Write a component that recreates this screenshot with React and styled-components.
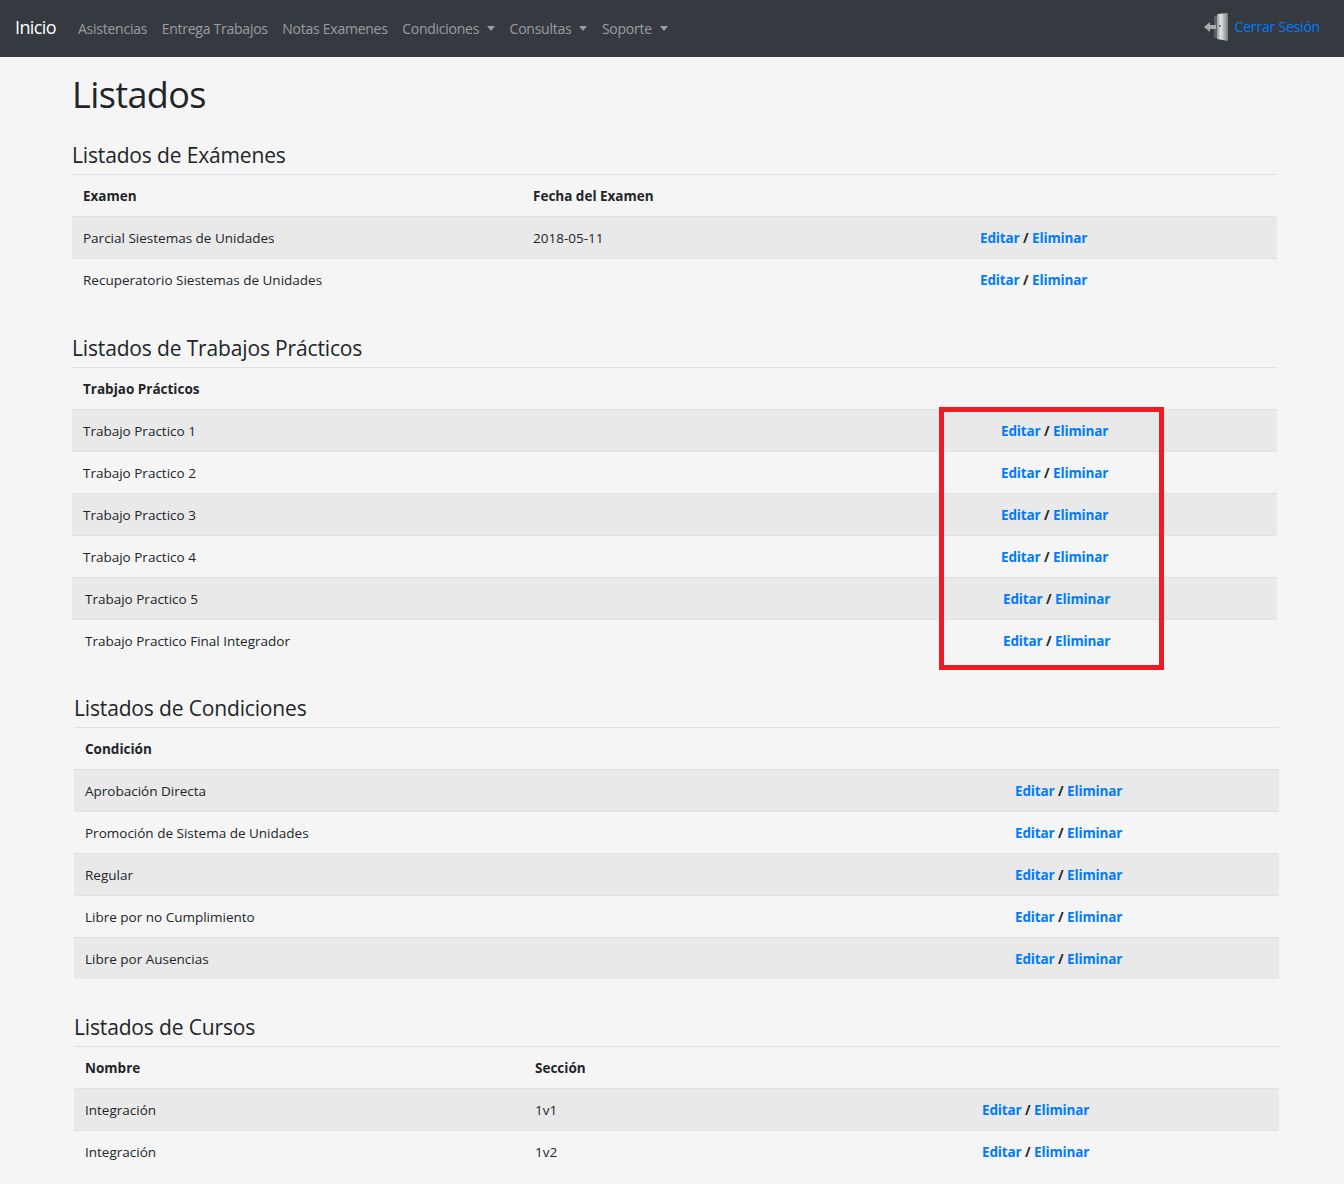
import React from 'react'
import styled, { createGlobalStyle } from 'styled-components'

const GlobalStyle = createGlobalStyle`
  html, body {
    margin: 0;
    padding: 0;
    background: #f5f5f5;
  }
  body {
    font-family: "Open Sans", "Noto Sans", "Liberation Sans", sans-serif;
    font-size: 13.5px;
    color: #212529;
  }
`
const Page = styled.div`
  position: relative;
  height: 1184px;
  overflow: hidden;
`
const Navbar = styled.nav`
  display: flex;
  align-items: center;
  height: 57px;
  padding: 0 24px 0 15px;
  background: #343a40;
`
const Brand = styled.a`
  margin: -3px 22px 0 0;
  font-size: 18px;
  letter-spacing: -0.6px;
  color: #fff;
`
const NavLinks = styled.div`
  display: flex;
  flex: 1;
  gap: 14.5px;
  margin-top: -1px;
`
const NavLink = styled.a`
  display: flex;
  align-items: center;
  font-size: 14px;
  letter-spacing: -0.25px;
  color: rgba(255, 255, 255, 0.5);
`
const Caret = styled.span`
  margin-left: 8px;
  border-top: 5px solid rgba(255, 255, 255, 0.5);
  border-left: 4.5px solid transparent;
  border-right: 4.5px solid transparent;
`
const Logout = styled.a`
  display: flex;
  align-items: center;
  gap: 5px;
  margin-top: -4px;
  font-size: 14px;
  letter-spacing: -0.2px;
  color: #007bff;
`
const Main = styled.main`
  padding: 0 67px 0 72px;
`
const Title = styled.h1`
  margin: 0;
  padding: 14px 0 0;
  height: 74px;
  box-sizing: border-box;
  font-size: 36px;
  font-weight: 500;
  line-height: 48px;
  letter-spacing: -0.6px;
`
const Section = styled.section`
  margin-left: ${p => p.$offset}px;
  margin-right: ${p => -p.$offset}px;
  padding-bottom: ${p => p.$after}px;
`
const SectionTitle = styled.h3`
  display: flex;
  align-items: center;
  margin: 0;
  padding-top: 4px;
  height: 44px;
  border-bottom: 1px solid #dee2e6;
  box-sizing: border-box;
  font-size: 21px;
  font-weight: 500;
  letter-spacing: -0.15px;
`
const Table = styled.table`
  width: 100%;
  border-collapse: collapse;
  table-layout: fixed;
`
const HeadCell = styled.th`
  height: 41px;
  padding: 0 11px;
  text-align: left;
  font-weight: 700;
`
const Row = styled.tr`
  background: ${p => (p.$odd ? '#e9e9e9' : 'transparent')};
  border-top: 1px solid #dee2e6;
`
const Cell = styled.td`
  height: 41px;
  padding: 0 11px 0 ${p => 11 + (p.$shift || 0)}px;
`
const Action = styled.a`
  font-weight: 700;
  letter-spacing: -0.15px;
  color: #007bff;
`
const Slash = styled.b`
  font-weight: 700;
`
const Highlight = styled.div`
  position: absolute;
  left: 939px;
  top: 407px;
  width: 225px;
  height: 263px;
  box-sizing: border-box;
  border: 5px solid #ed1c24;
`

const DoorIcon = () => (
  <svg width="26" height="28" viewBox="0 0 26 28">
    <defs>
      <linearGradient id="door" x1="0" x2="1" y1="0" y2="0">
        <stop offset="0" stopColor="#9a9c9e" />
        <stop offset="0.35" stopColor="#e4e4e4" />
        <stop offset="1" stopColor="#77797b" />
      </linearGradient>
    </defs>
    <path d="M13 1 L24 0 V28 L13 26 Z" fill="url(#door)" />
    <path d="M10 3 H13 V25 H10 Z" fill="#5d6165" />
    <path d="M0 14 L6 9 V12 H12 V16 H6 V19 Z" fill="#a9abad" />
    <rect x="15" y="12" width="1.5" height="2" fill="#55585a" />
  </svg>
)

const Actions = ({ shift }) => (
  <Cell $shift={shift}>
    <Action>Editar</Action> <Slash>/</Slash> <Action>Eliminar</Action>
  </Cell>
)

const sections = [
  {
    title: 'Listados de Exámenes',
    head: ['Examen', 'Fecha del Examen'],
    widths: [450, 447, 308],
    after: 24,
    rows: [
      { cells: ['Parcial Siestemas de Unidades', '2018-05-11'] },
      { cells: ['Recuperatorio Siestemas de Unidades', ''] },
    ],
  },
  {
    title: 'Listados de Trabajos Prácticos',
    head: ['Trabjao Prácticos'],
    widths: [918, 287],
    after: 23,
    rows: [
      { cells: ['Trabajo Practico 1'] },
      { cells: ['Trabajo Practico 2'] },
      { cells: ['Trabajo Practico 3'] },
      { cells: ['Trabajo Practico 4'] },
      { cells: ['Trabajo Practico 5'], shift: 2 },
      { cells: ['Trabajo Practico Final Integrador'], shift: 2 },
    ],
  },
  {
    title: 'Listados de Condiciones',
    head: ['Condición'],
    widths: [930, 275],
    offset: 2,
    after: 24,
    rows: [
      { cells: ['Aprobación Directa'] },
      { cells: ['Promoción de Sistema de Unidades'] },
      { cells: ['Regular'] },
      { cells: ['Libre por no Cumplimiento'] },
      { cells: ['Libre por Ausencias'] },
    ],
  },
  {
    title: 'Listados de Cursos',
    head: ['Nombre', 'Sección'],
    widths: [450, 447, 308],
    offset: 2,
    after: 0,
    rows: [
      { cells: ['Integración', '1v1'] },
      { cells: ['Integración', '1v2'] },
    ],
  },
]

const ListSection = ({ title, head, widths, rows, offset = 0, after }) => (
  <Section $offset={offset} $after={after}>
    <SectionTitle>{title}</SectionTitle>
    <Table>
      <colgroup>
        {widths.map((w, i) => <col key={i} width={w} />)}
      </colgroup>
      <thead>
        <tr>
          {head.map(h => <HeadCell key={h}>{h}</HeadCell>)}
          <HeadCell />
        </tr>
      </thead>
      <tbody>
        {rows.map((row, i) => (
          <Row key={i} $odd={i % 2 === 0}>
            {row.cells.map((c, j) => <Cell key={j} $shift={row.shift}>{c}</Cell>)}
            <Actions shift={row.shift} />
          </Row>
        ))}
      </tbody>
    </Table>
  </Section>
)

export default function App() {
  return (
    <Page>
      <GlobalStyle />
      <Navbar>
        <Brand>Inicio</Brand>
        <NavLinks>
          <NavLink>Asistencias</NavLink>
          <NavLink>Entrega Trabajos</NavLink>
          <NavLink>Notas Examenes</NavLink>
          <NavLink>Condiciones<Caret /></NavLink>
          <NavLink>Consultas<Caret /></NavLink>
          <NavLink>Soporte<Caret /></NavLink>
        </NavLinks>
        <Logout><DoorIcon />Cerrar Sesión</Logout>
      </Navbar>
      <Main>
        <Title>Listados</Title>
        {sections.map(s => <ListSection key={s.title} {...s} />)}
      </Main>
      <Highlight />
    </Page>
  )
}
